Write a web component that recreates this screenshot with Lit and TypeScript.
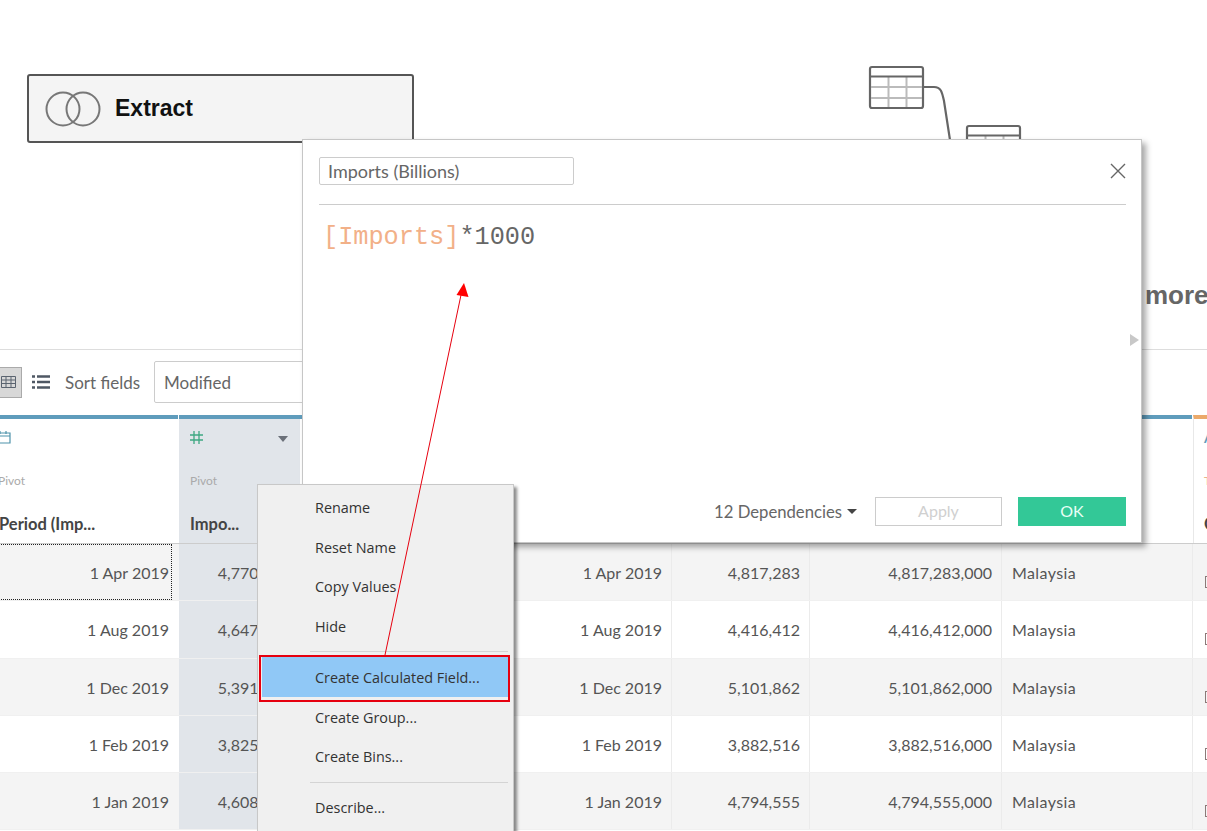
import { LitElement, html, css, svg } from "lit";
import { customElement } from "lit/decorators.js";

const ROWS = [
  ["1 Apr 2019", "4,770,123", "1 Apr 2019", "4,817,283", "4,817,283,000"],
  ["1 Aug 2019", "4,647,318", "1 Aug 2019", "4,416,412", "4,416,412,000"],
  ["1 Dec 2019", "5,391,204", "1 Dec 2019", "5,101,862", "5,101,862,000"],
  ["1 Feb 2019", "3,825,671", "1 Feb 2019", "3,882,516", "3,882,516,000"],
  ["1 Jan 2019", "4,608,945", "1 Jan 2019", "4,794,555", "4,794,555,000"],
];

const tableIcon = svg`
  <rect x="1" y="1" width="53" height="41" rx="2" fill="#fff" stroke="#666" stroke-width="2.2"/>
  <path d="M2 21H53M2 32H53M19.5 11V41M37.5 11V41" stroke="#bbb" stroke-width="2" fill="none"/>
  <path d="M1 10.5H54" stroke="#666" stroke-width="2.2"/>`;

@customElement("app-root")
export class AppRoot extends LitElement {
  static styles = css`
    :host { display: block; position: relative; width: 1207px; height: 831px; overflow: hidden; background: #fff; font-family: "Lato", "Open Sans", sans-serif; color: #555; }
    .canvas { position: relative; height: 349px; border-bottom: 1px solid #ddd; }
    .extract { position: absolute; left: 27px; top: 74px; width: 387px; height: 69px; box-sizing: border-box; background: #f4f4f4; border: 2px solid #555; border-radius: 3px; display: flex; align-items: center; gap: 14px; padding-left: 16px; }
    .extract span { font: bold 23px "Liberation Sans", Arial, sans-serif; color: #111; }
    .flow { position: absolute; left: 0; top: 0; }
    .more { position: absolute; left: 1145px; top: 280px; font: bold 26px "Liberation Sans", Arial, sans-serif; color: #666; white-space: nowrap; }

    .toolbar { height: 65px; display: flex; align-items: center; box-sizing: border-box; padding-bottom: 1px; }
    .viewbtn { width: 22px; height: 31px; box-sizing: border-box; background: #d8d8d8; border: 1px solid #aaa; border-left: 0; display: flex; align-items: center; justify-content: flex-end; padding-right: 5px; }
    .listbtn { margin-left: 10px; display: flex; }
    .sortlabel { margin-left: 15px; width: 89px; font-size: 17px; color: #666; flex: none; }
    .select { width: 200px; height: 42px; box-sizing: border-box; border: 1px solid #ccc; border-radius: 2px; padding-left: 9px; display: flex; align-items: center; font-size: 17px; color: #666; }

    .grid { display: grid; grid-template-columns: 179px 121px 372px 138px 192px 191px 14px; }
    .head { height: 129px; border-bottom: 1px solid #ccc; box-sizing: border-box; }
    .hcell { border-top: 4px solid #5f9cbc; margin-right: 1px; box-sizing: border-box; display: flex; flex-direction: column; padding-top: 10px; min-width: 0; white-space: nowrap; overflow: hidden; }
    .hcell.sel { background: #e1e5ea; padding-left: 11px; margin-right: 0; position: relative; }
    .hcell.text { border-top-color: #eba96a; border-left: 1px solid #e8e8e8; padding-left: 10px; margin-right: 0; }
    .hicon { height: 16px; display: flex; align-items: center; }
    .hicon.off { margin-left: -5px; }
    .hsrc { margin-top: 29px; height: 14px; font-size: 12px; line-height: 14px; color: #aaa; }
    .hsrc.off { margin-left: -2px; }
    .hname { margin-top: 26px; height: 20px; font-size: 16.5px; line-height: 20px; font-weight: 700; color: #444; }
    .hname.off { margin-left: -1px; }
    .caret { position: absolute; right: 12px; top: 17px; width: 0; height: 0; border: 5.5px solid transparent; border-top: 6px solid #6b7079; border-bottom: 0; }
    .hcell.text .hicon { color: #5f9cbc; font-size: 14px; font-weight: 700; }
    .hcell.text .hsrc { color: #e8b58c; }

    .row { height: 57.25px; box-sizing: border-box; border-bottom: 1px solid #f0f0f0; }
    .row.odd { background: #f4f4f4; }
    .cell { display: flex; align-items: center; justify-content: flex-end; padding: 1px 9px 0 0; font-size: 16px; color: #555; white-space: nowrap; border-right: 1px solid #ebebeb; min-width: 0; overflow: hidden; }
    .cell.sel { background: #e1e5ea; border-right: 0; padding-right: 10px; }
    .cell.first { border-right: 0; padding-right: 10px; }
    .cell.left { justify-content: flex-start; padding-left: 10px; padding-right: 0; letter-spacing: .4px; }
    .cell.plain { border-right: 0; padding-left: 12px; padding-right: 0; justify-content: flex-start; }
    .focus { position: relative; overflow: visible; }
    .focus::after { content: ""; position: absolute; left: -3px; right: 7px; top: 0; bottom: 0; border: 1px dotted #222; }
    .sq { flex: none; width: 6px; height: 10px; border: 1px solid #8a7a78; margin-top: 19px; }

    .dialog { position: absolute; left: 302px; top: 139px; width: 840px; height: 404px; box-sizing: border-box; background: #fff; border: 1px solid #c6c6c6; box-shadow: 4px 4px 6px rgba(0,0,0,.35); padding: 17px 15px 16px 16px; display: flex; flex-direction: column; }
    .dhead { display: flex; align-items: center; justify-content: space-between; height: 48px; flex: none; border-bottom: 1px solid #ccc; box-sizing: border-box; padding-bottom: 19px; }
    .name { width: 255px; height: 28px; box-sizing: border-box; border: 1px solid #ccc; border-radius: 2px; padding-left: 8px; font-size: 18px; line-height: 27px; color: #666; }
    .close { display: flex; }
    .code { margin: 18px 0 0 4px; font: 25.25px/30px "Liberation Mono", "Courier New", monospace; color: #666; flex: 1; }
    .code b { font-weight: 400; color: #f2b088; }
    .dfoot { display: flex; align-items: center; justify-content: flex-end; height: 29px; flex: none; }
    .deps { font-size: 16.7px; color: #666; margin-right: 18px; display: flex; align-items: center; gap: 5px; }
    .deps i { width: 0; height: 0; border: 5px solid transparent; border-top: 5px solid #444; border-bottom: 0; }
    .btn { height: 29px; box-sizing: border-box; display: flex; align-items: center; justify-content: center; font-size: 16px; padding-bottom: 2px; }
    .apply { width: 127px; border: 1px solid #ccc; color: #d0d0d0; margin-right: 16px; }
    .ok { width: 108px; background: #33c897; color: #e8fff6; }
    .expand { position: absolute; left: 827px; top: 194px; width: 0; height: 0; border: 6px solid transparent; border-left: 9px solid #c8c8c8; border-right: 0; }

    .menu { position: absolute; left: 257px; top: 484px; width: 257px; height: 360px; box-sizing: border-box; background: #f0f0f0; border: 1px solid #c8c8c8; box-shadow: 3px 3px 3px rgba(0,0,0,.45); padding-top: 2.5px; font-family: "Open Sans", sans-serif; font-size: 14.4px; color: #333; }
    .item { height: 39.7px; display: flex; align-items: center; padding-left: 53px; margin: 0 5px 0 4px; white-space: nowrap; box-sizing: border-box; }
    .item.sel { height: 40px; background: #90c8f6; }
    .sep { height: 1px; background: #d4d4d4; margin: 5px 5px 5px 52px; }
    .hl { position: absolute; left: 259px; top: 655px; width: 251px; height: 47px; box-sizing: border-box; border: 2px solid #e6000f; }
    .arrow { position: absolute; left: 0; top: 0; pointer-events: none; }
  `;

  render() {
    return html`
      <section class="canvas">
        <svg class="flow" width="1207" height="349" viewBox="0 0 1207 349">
          <g transform="translate(869 66)">${tableIcon}</g>
          <g transform="translate(966 125)">${tableIcon}</g>
          <path d="M924 87H934C941 87 942 92 944 101L950 140" fill="none" stroke="#666" stroke-width="2.2"/>
        </svg>
        <div class="extract">
          <svg width="56" height="36" viewBox="0 0 56 36"><circle cx="18" cy="18" r="16.5" fill="none" stroke="#777" stroke-width="2"/><circle cx="38" cy="18" r="16.5" fill="none" stroke="#777" stroke-width="2"/></svg>
          <span>Extract</span>
        </div>
        <div class="more">more</div>
      </section>

      <div class="toolbar">
        <div class="viewbtn">
          <svg width="15" height="12" viewBox="0 0 15 12"><path d="M.5.5H14.5V11.5H.5ZM.5 4H14.5M.5 7.5H14.5M5 .5V11.5M10 .5V11.5" fill="none" stroke="#5b6470" stroke-width="1"/></svg>
        </div>
        <div class="listbtn">
          <svg width="18" height="14" viewBox="0 0 18 14"><path d="M0 1.5H3M5 1.5H18M0 7H3M5 7H18M0 12.5H3M5 12.5H18" stroke="#4f5864" stroke-width="2.4"/></svg>
        </div>
        <span class="sortlabel">Sort fields</span>
        <div class="select">Modified</div>
      </div>

      <div class="grid head">
        <div class="hcell">
          <div class="hicon off"><svg width="16" height="14" viewBox="0 0 16 14"><path d="M1 3H15V13H1ZM1 6H15M5 1V4M11 1V4" fill="none" stroke="#4f93ab" stroke-width="1.2"/></svg></div>
          <div class="hsrc off">Pivot</div>
          <div class="hname off">Period (Imp...</div>
        </div>
        <div class="hcell sel">
          <div class="hicon"><svg width="13" height="13" viewBox="0 0 13 13"><path d="M4 0V13M9 0V13M0 4H13M0 9H13" stroke="#3ea882" stroke-width="1.3"/></svg></div>
          <div class="hsrc">Pivot</div>
          <div class="hname">Impo...</div>
          <i class="caret"></i>
        </div>
        <div class="hcell"></div>
        <div class="hcell"></div>
        <div class="hcell"></div>
        <div class="hcell"></div>
        <div class="hcell text">
          <div class="hicon">Abc</div>
          <div class="hsrc">Table</div>
          <div class="hname">Country</div>
        </div>
      </div>

      ${ROWS.map((r, i) => html`
        <div class="grid row ${i % 2 === 0 ? "odd" : ""}">
          <div class="cell first ${i === 0 ? "focus" : ""}">${r[0]}</div>
          <div class="cell sel">${r[1]}</div>
          <div class="cell">${r[2]}</div>
          <div class="cell">${r[3]}</div>
          <div class="cell">${r[4]}</div>
          <div class="cell left">Malaysia</div>
          <div class="cell plain"><i class="sq"></i></div>
        </div>`)}

      <div class="dialog">
        <div class="dhead">
          <div class="name">Imports (Billions)</div>
          <div class="close"><svg width="16" height="16" viewBox="0 0 16 16"><path d="M1 1L15 15M15 1L1 15" stroke="#666" stroke-width="1.4"/></svg></div>
        </div>
        <div class="code"><b>[Imports]</b>*1000</div>
        <div class="dfoot">
          <div class="deps">12 Dependencies <i></i></div>
          <div class="btn apply">Apply</div>
          <div class="btn ok">OK</div>
        </div>
        <i class="expand"></i>
      </div>

      <div class="menu">
        <div class="item">Rename</div>
        <div class="item">Reset Name</div>
        <div class="item">Copy Values</div>
        <div class="item">Hide</div>
        <div class="sep"></div>
        <div class="item sel">Create Calculated Field...</div>
        <div class="item">Create Group...</div>
        <div class="item">Create Bins...</div>
        <div class="sep"></div>
        <div class="item">Describe...</div>
      </div>

      <div class="hl"></div>
      <svg class="arrow" width="1207" height="831" viewBox="0 0 1207 831">
        <path d="M385 655L461 295" stroke="#e6000f" stroke-width="1" fill="none"/>
        <path d="M464 283L468.5 297L456.5 295Z" fill="#f00"/>
      </svg>
    `;
  }
}
